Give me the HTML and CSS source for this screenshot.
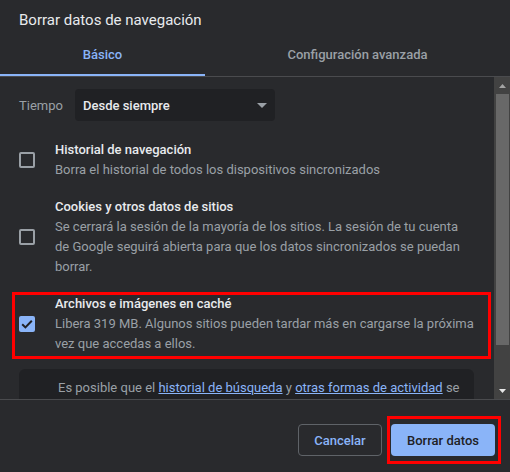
FILE: index.html
```html
<!DOCTYPE html>
<html lang="es">
<head>
<meta charset="utf-8">
<link rel="stylesheet" href="styles.css">
</head>
<body>
<div class="dialog">
  <div class="title">Borrar datos de navegación</div>
  <div class="tabs">
    <div class="tab tab-active">Básico</div>
    <div class="tab">Configuración avanzada</div>
  </div>
  <div class="body">
    <div class="scroll">
      <div class="time-row">
        <span class="time-label">Tiempo</span>
        <div class="select">
          <span>Desde siempre</span>
          <svg class="caret" width="10" height="5" viewBox="0 0 10 5"><path d="M0 0h10L5 5z" fill="#9aa0a6"/></svg>
        </div>
      </div>
      <div class="item">
        <div class="cb-wrap"><span class="cb"></span></div>
        <div class="item-text">
          <div class="item-title">Historial de navegación</div>
          <div class="item-desc">Borra el historial de todos los dispositivos sincronizados</div>
        </div>
      </div>
      <div class="item">
        <div class="cb-wrap"><span class="cb"></span></div>
        <div class="item-text">
          <div class="item-title">Cookies y otros datos de sitios</div>
          <div class="item-desc">Se cerrará la sesión de la mayoría de los sitios. La sesión de tu cuenta de Google seguirá abierta para que los datos sincronizados se puedan borrar.</div>
        </div>
      </div>
      <div class="item item-marked">
        <div class="cb-wrap"><span class="cb cb-on"><svg width="12" height="10" viewBox="0 0 12 10"><path d="M1.2 5.2l3.2 3.2L10.8 1.8" fill="none" stroke="#202124" stroke-width="2"/></svg></span></div>
        <div class="item-text">
          <div class="item-title">Archivos e imágenes en caché</div>
          <div class="item-desc">Libera 319 MB. Algunos sitios pueden tardar más en cargarse la próxima vez que accedas a ellos.</div>
        </div>
        <div class="mark mark-row"></div>
      </div>
      <div class="notice">Es posible que el <a href="#">historial de búsqueda</a> y <a href="#">otras formas de actividad</a> se guarden en tu cuenta de Google cuando inicies sesión. Puedes eliminarlos en cualquier momento.</div>
    </div>
    <div class="scrollbar">
      <div class="sb-btn"><svg width="7" height="4" viewBox="0 0 7 4"><path d="M0 4h7L3.5 0z" fill="#a3a3a3"/></svg></div>
      <div class="sb-track"><div class="sb-thumb"></div></div>
      <div class="sb-btn"><svg width="7" height="4" viewBox="0 0 7 4"><path d="M0 0h7L3.5 4z" fill="#e8e8e8"/></svg></div>
    </div>
  </div>
  <div class="footer">
    <button class="btn btn-cancel">Cancelar</button>
    <div class="btn-holder">
      <button class="btn btn-primary">Borrar datos</button>
      <div class="mark mark-btn"></div>
    </div>
  </div>
</div>
</body>
</html>
```

FILE: styles.css
```css
* { box-sizing: border-box; }
html, body { margin: 0; padding: 0; }
body {
  background: #292a2d;
  font-family: Roboto, "Liberation Sans", sans-serif;
  color: #e8eaed;
  width: 510px;
  height: 472px;
  overflow: hidden;
}
.dialog {
  display: flex;
  flex-direction: column;
  height: 472px;
}
.title {
  font-size: 15px;
  line-height: 20px;
  padding: 10px 19px 0;
  height: 36px;
  color: #e8eaed;
}
.tabs {
  display: flex;
  height: 41px;
  border-bottom: 1px solid #4a4b4e;
}
.tab {
  flex: 1;
  text-align: center;
  font-size: 13px;
  font-weight: 500;
  color: #9aa0a6;
  line-height: 38px;
  border-bottom: 2px solid transparent;
}
.tab-active {
  flex: 0 0 205px;
  color: #8ab4f8;
  border-bottom-color: #8ab4f8;
}
.body {
  display: flex;
  height: 322px;
  overflow: hidden;
}
.scroll {
  flex: 1;
  overflow: hidden;
  padding: 12px 20px 0 19px;
}
.time-row {
  display: flex;
  align-items: center;
  margin-bottom: 11px;
}
.time-label {
  width: 56px;
  font-size: 13px;
  color: #9aa0a6;
}
.select {
  width: 200px;
  height: 32px;
  background: #202124;
  border-radius: 4px;
  display: flex;
  align-items: center;
  justify-content: space-between;
  padding: 0 8px;
  font-size: 13px;
  font-weight: 500;
  color: #e8eaed;
}
.item {
  position: relative;
  display: flex;
  padding: 8px 0 9px;
}
.cb-wrap {
  width: 36px;
  display: flex;
  align-items: center;
}
.cb {
  width: 16px;
  height: 16px;
  border: 2px solid #9aa0a6;
  border-radius: 2px;
  display: flex;
  align-items: center;
  justify-content: center;
}
.cb-on {
  background: #8ab4f8;
  border-color: #8ab4f8;
}
.item-text {
  flex: 1;
  font-size: 13px;
  line-height: 20px;
}
.item-title {
  font-weight: 500;
  color: #e8eaed;
}
.item-desc {
  color: #9aa0a6;
}
.mark {
  position: absolute;
  border: 3px solid #ff0000;
  pointer-events: none;
}
.mark-row {
  left: -7px;
  right: -17px;
  top: 6px;
  bottom: 4px;
}
.notice {
  background: #202124;
  border-radius: 6px;
  margin-top: 6px;
  padding: 9px 8px 9px 39px;
  font-size: 13px;
  line-height: 20px;
  color: #9aa0a6;
}
.notice a {
  color: #8ab4f8;
  text-decoration: underline;
}
.scrollbar {
  width: 16px;
  background: #424242;
  display: flex;
  flex-direction: column;
}
.sb-btn {
  height: 17px;
  display: flex;
  align-items: center;
  justify-content: center;
}
.sb-track {
  flex: 1;
  padding: 0 1px 0 2px;
}
.sb-thumb {
  height: 251px;
  background: #686868;
}
.footer {
  flex: 1;
  border-top: 1px solid #4a4b4e;
  display: flex;
  justify-content: flex-end;
  align-items: flex-start;
  gap: 9px;
  padding: 24px 15px 0 0;
}
.btn {
  height: 32px;
  border-radius: 4px;
  font-family: Roboto, "Liberation Sans", sans-serif;
  font-size: 13px;
  font-weight: 500;
  padding: 0;
}
.btn-cancel {
  width: 84px;
  background: transparent;
  border: 1px solid #5f6368;
  color: #8ab4f8;
}
.btn-holder {
  position: relative;
}
.btn-primary {
  width: 104px;
  background: #8ab4f8;
  border: none;
  color: #202124;
}
.mark-btn {
  left: -4px;
  right: -6px;
  top: -8px;
  bottom: -8px;
}
```
